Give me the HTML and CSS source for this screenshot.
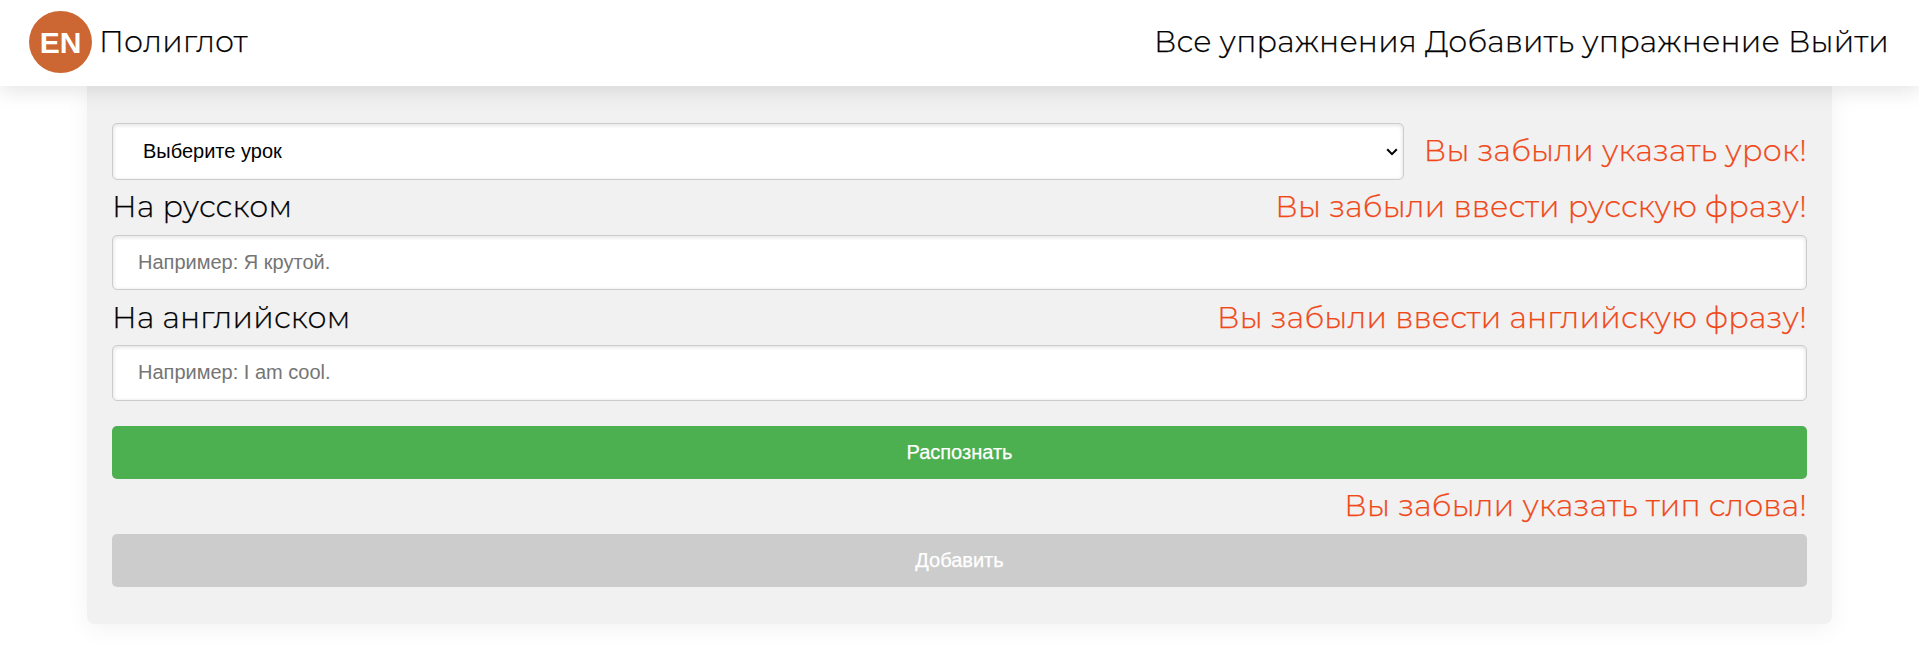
FILE: index.html
```html
<!DOCTYPE html>
<html lang="ru">
<head>
<meta charset="utf-8">
<title>Полиглот</title>
<link rel="stylesheet" href="styles.css">
</head>
<body>
<header class="header">
  <div class="brand">
    <svg class="logo" viewBox="0 0 63 63"><ellipse cx="31.5" cy="32" rx="31.5" ry="31" fill="#cc6633"/><text class="logo-text" x="31.5" y="43" text-anchor="middle">EN</text></svg>
    <span>Полиглот</span>
  </div>
  <nav class="nav"><a>Все упражнения</a> <a>Добавить упражнение</a> <a>Выйти</a></nav>
</header>
<form class="card">
  <div class="select-row">
    <div class="select-box">
      <select class="field select"><option>Выберите урок</option></select>
      <svg class="chevron" viewBox="0 0 12 8"><path d="M1.2 1.3 6 6.1l4.800-4.800" fill="none" stroke="#000" stroke-width="2"/></svg>
    </div>
    <span class="error">Вы забыли указать урок!</span>
  </div>
  <div class="label-row"><label>На русском</label><span class="error">Вы забыли ввести русскую фразу!</span></div>
  <input class="field" type="text" placeholder="Например: Я крутой.">
  <div class="label-row label-row-low"><label>На английском</label><span class="error">Вы забыли ввести английскую фразу!</span></div>
  <input class="field field-last" type="text" placeholder="Например: I am cool.">
  <button class="button" type="button">Распознать</button>
  <div class="label-row label-row-end"><span class="error">Вы забыли указать тип слова!</span></div>
  <button class="button button-disabled" type="button" disabled>Добавить</button>
</form>
</body>
</html>
```
FILE: styles.css
```css
* { box-sizing: border-box; }
body {
  margin: 0;
  min-height: 100vh;
  background: #fff;
  color: #000;
  font: 300 30px/37px Montserrat, "Open Sans", sans-serif;
  letter-spacing: .24px;
  -webkit-text-stroke: .25px;
}
.header {
  position: relative;
  z-index: 1;
  display: flex;
  justify-content: space-between;
  align-items: center;
  height: 86px;
  padding: 0 30px 3px 29px;
  background: #fff;
  box-shadow: 0 5px 20px rgba(0, 0, 0, .11);
}
.brand { display: flex; align-items: center; gap: 7px; }
.logo { width: 63px; height: 63px; }
.logo-text {
  font: 700 30px "Liberation Sans", sans-serif;
  letter-spacing: 0;
  fill: #fff;
  -webkit-text-stroke: 0;
}
.nav { letter-spacing: .2px; }
.card {
  display: flex;
  flex-direction: column;
  margin: 0 87px;
  padding: 37px 25px;
  background: #f1f1f1;
  border-radius: 0 0 8px 8px;
  box-shadow: 0 5px 25px rgba(0, 0, 0, .05);
}
.select-row { display: flex; align-items: center; gap: 20px; }
.select-row .error { padding-bottom: 2px; }
.select-box { display: grid; flex: 1; align-items: center; }
.select-box > * { grid-area: 1 / 1; }
.chevron { justify-self: end; width: 12px; height: 8px; margin-right: 6px; pointer-events: none; }
.label-row {
  display: flex;
  justify-content: space-between;
  align-items: center;
  height: 55px;
  padding-bottom: 3px;
}
.label-row-low { padding-bottom: 1px; }
.label-row-end { justify-content: flex-end; }
.error { color: #f04818; white-space: nowrap; }
.field {
  width: 100%;
  height: 55px;
  padding: 0 25px;
  background-color: #fff;
  border: 1px solid #ccc;
  border-radius: 5px;
  box-shadow: inset 0 1px 4px rgba(0, 0, 0, .14);
  color: #000;
  font: 400 20px "Liberation Sans", Arial, sans-serif;
  letter-spacing: 0;
  -webkit-text-stroke: 0;
}
.field::placeholder { color: #757575; }
.select { appearance: none; height: 57px; padding: 0 30px 2px; }
.field-last { height: 56px; padding-bottom: 2px; margin-bottom: 25px; }
.button {
  height: 53px;
  padding: 0;
  border: 0;
  border-radius: 5px;
  background: #4caf50;
  color: #fff;
  font: 400 20px "Liberation Sans", Arial, sans-serif;
}
.button-disabled { background: #ccc; }
```
